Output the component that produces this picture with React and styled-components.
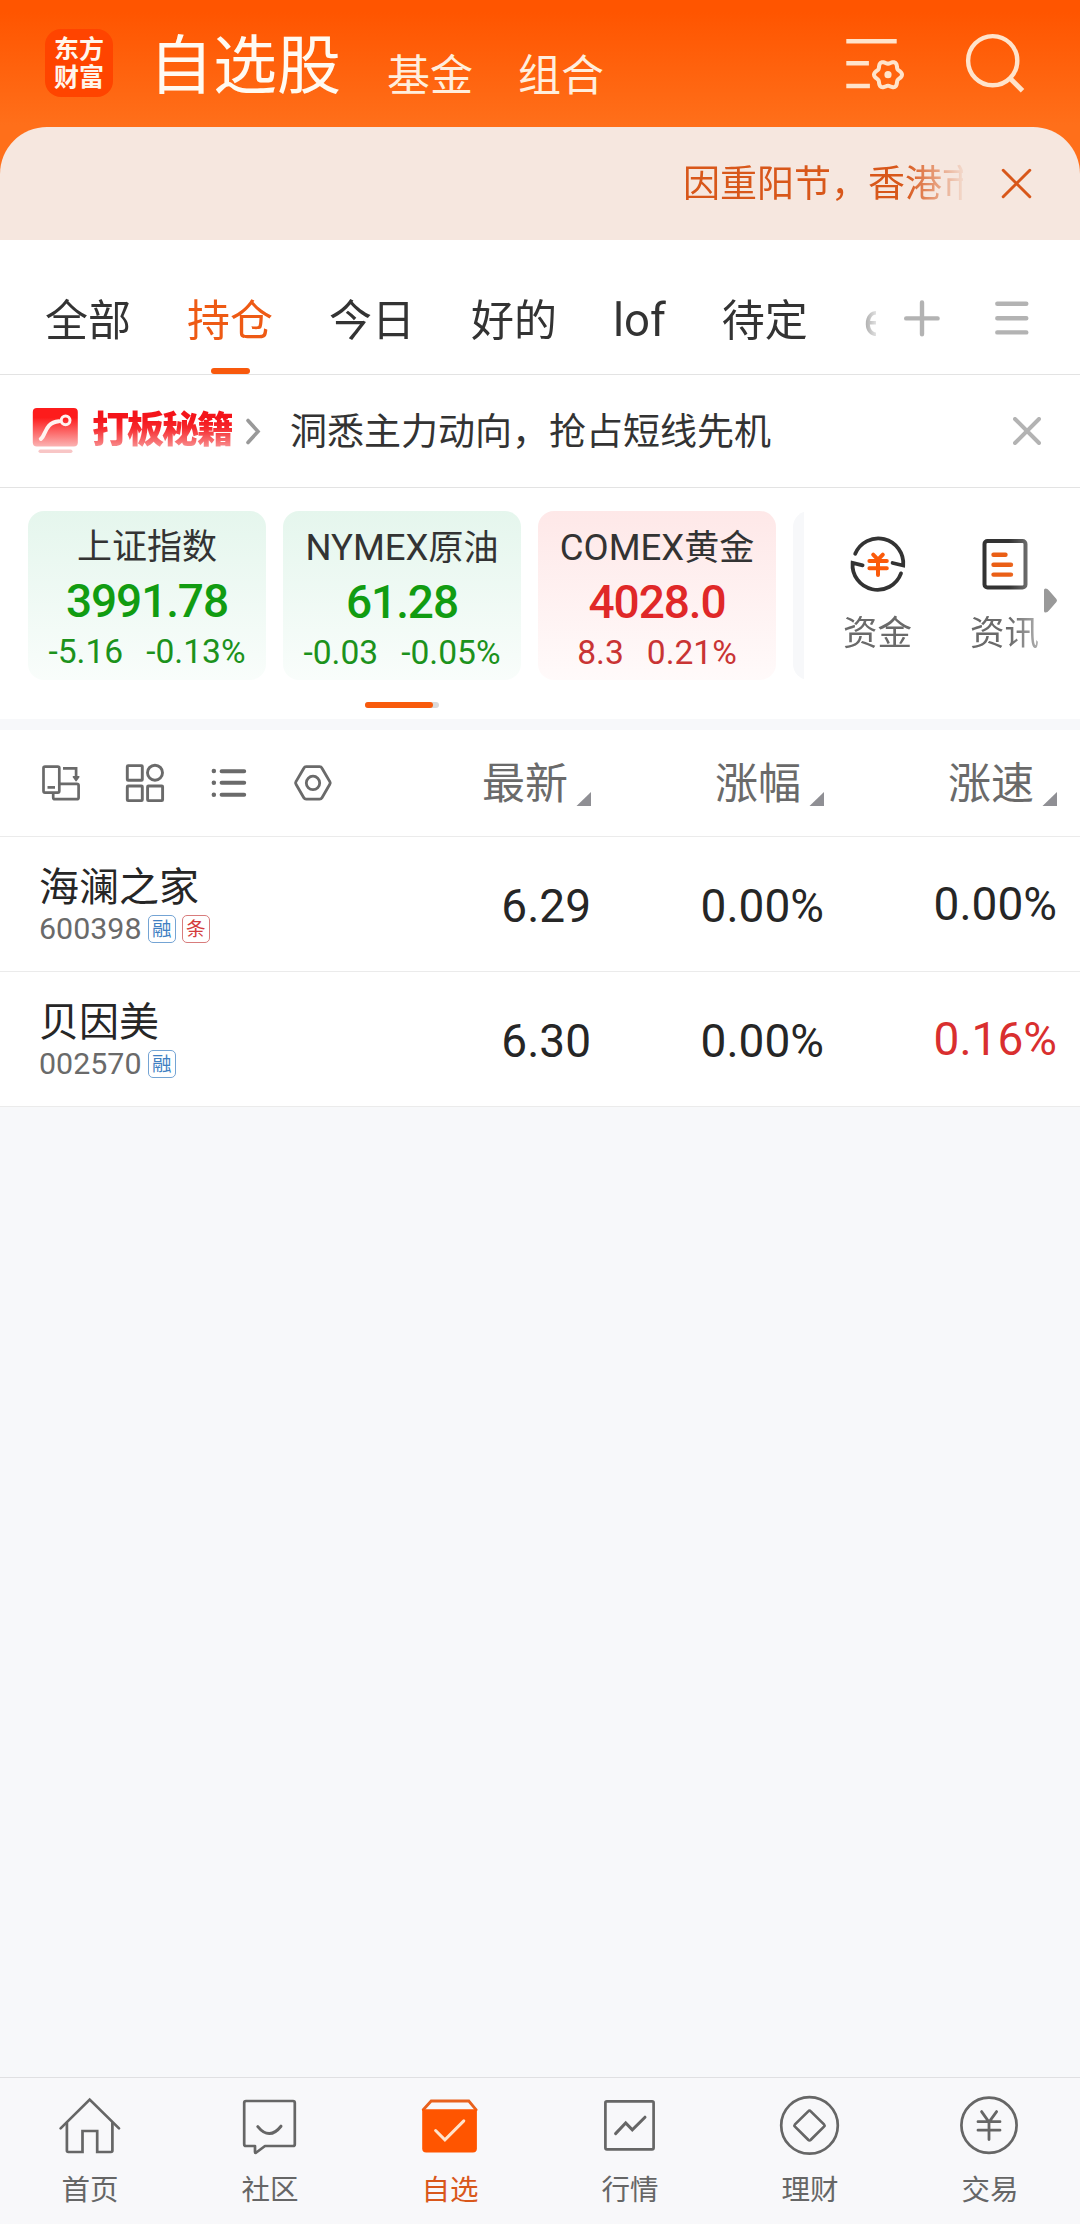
import styled, { createGlobalStyle, css } from "styled-components";

const GlobalStyle = createGlobalStyle`
  * {
    box-sizing: border-box;
  }

  body {
    margin: 0;
    background: #f7f8fa;
    font-family: Roboto, "Noto Sans CJK SC", sans-serif;
    color: #333;
  }

  svg {
    display: block;
    flex: none;
  }
`;

const Page = styled.div`
  width: 1080px;
  height: 2224px;
  display: flex;
  flex-direction: column;
  overflow: hidden;
  white-space: nowrap;
`;

/* ---------- header ---------- */

const Top = styled.header`
  flex: none;
  height: 240px;
  background: linear-gradient(180deg, #ff5500 12px, #ff6f1a 125px, #ff6f1a 180px);
`;

const TitleBar = styled.div`
  height: 127px;
  display: flex;
  align-items: flex-start;
  padding-left: 45px;
`;

const Logo = styled.div`
  width: 68px;
  height: 68px;
  margin: 29px 36px 0 0;
  padding-top: 7px;
  border-radius: 16px;
  background: #ff4400;
  color: #fff6ec;
  font-size: 25px;
  font-weight: 700;
  line-height: 28px;
  text-align: center;
`;

const MainTitle = styled.h1`
  margin: 27px 46px 0 0;
  width: 192px;
  font-size: 64px;
  font-weight: 400;
  line-height: 80px;
  color: #fffaf2;
`;

const SubTitle = styled.span`
  width: 86px;
  margin: 46px 45px 0 0;
  font-size: 43px;
  line-height: 60px;
  color: #ffeedd;
`;

const HeaderIcons = styled.div`
  flex: 1;
  display: flex;
  justify-content: flex-end;
  gap: 56px;
  padding: 30px 52px 0 0;
`;

const Notice = styled.div`
  height: 113px;
  display: flex;
  align-items: center;
  justify-content: flex-end;
  border-radius: 47px 47px 0 0;
  background: #f6e7df;
  color: #d8571a;
`;

const Marquee = styled.div`
  width: 280px;
  padding-top: 2px;
  overflow: hidden;
  font-size: 37px;
  line-height: 52px;
  mask-image: linear-gradient(90deg, #000 222px, transparent 286px);
`;

const NoticeClose = styled.div`
  padding: 0 48px 0 38px;
`;

/* ---------- group tabs ---------- */

const TabBar = styled.nav`
  flex: none;
  height: 135px;
  display: flex;
  background: #fff;
  border-bottom: 1px solid #e3e3e3;
`;

const TabScroll = styled.div`
  width: 876px;
  display: flex;
  gap: 56px;
  padding-left: 45px;
  overflow: hidden;
  mask-image: linear-gradient(90deg, #000 840px, transparent 882px);
`;

const Tab = styled.div`
  flex: none;
  position: relative;
  height: 134px;
  padding-top: 50px;
  font-size: ${({ $latin }) => ($latin ? 45.5 : 43)}px;
  line-height: 62px;
  color: ${({ $active }) => ($active ? "#ee5a14" : "#333")};

  ${({ $active }) =>
    $active &&
    css`
      &::after {
        content: "";
        position: absolute;
        left: 50%;
        bottom: 0;
        width: 39px;
        height: 6px;
        margin-left: -19px;
        border-radius: 3px;
        background: #f8590d;
      }
    `}
`;

const TabActions = styled.div`
  display: flex;
  align-items: flex-start;
  gap: 50px;
  padding: 58px 0 0 26px;
`;

/* ---------- promo ---------- */

const Promo = styled.div`
  flex: none;
  height: 113px;
  display: flex;
  align-items: center;
  padding: 0 39px 0 31px;
  background: #fff;
  border-bottom: 1px solid #e3e3e3;
`;

const PromoTitle = styled.span`
  width: 140px;
  margin: 0 13px 0 13px;
  font-size: 37px;
  font-weight: 900;
  letter-spacing: -2px;
  line-height: 46px;
  color: transparent;
  background: linear-gradient(180deg, #f4141a 10px, #f6282c 20px, #f9a8a8 44px);
  background-clip: text;
`;

const PromoText = styled.span`
  flex: 1;
  margin-left: 28px;
  padding-top: 3px;
  font-size: 37px;
  line-height: 54px;
  color: #333;
`;

/* ---------- index cards ---------- */

const Board = styled.section`
  flex: none;
  height: 231px;
  display: flex;
  padding-top: 23px;
  background: #fff;
`;

const CardArea = styled.div`
  width: 804px;
`;

const CardList = styled.div`
  display: flex;
  gap: 17px;
  padding-left: 28px;
  overflow: hidden;
`;

const tones = {
  down: { bg: "linear-gradient(180deg, #e5f6ed, #f9fdfb)", value: "#119c11", sub: "#1c921c" },
  up: { bg: "linear-gradient(180deg, #fee8e8, #fffafa)", value: "#e02828", sub: "#c93434" },
  idle: { bg: "#f7f8fa", value: "#333", sub: "#333" },
};

const Card = styled.div`
  flex: none;
  width: 238px;
  height: 169px;
  border-radius: 16px;
  background: ${({ $tone }) => tones[$tone].bg};
  text-align: center;
`;

const CardName = styled.div`
  padding-top: 13px;
  font-size: 35px;
  line-height: 48px;
  color: #333;
`;

const Latin = styled.span`
  font-size: 36.5px;
`;

const CardValue = styled.div`
  font-size: 46px;
  font-weight: 500;
  line-height: 58px;
  letter-spacing: -1.1px;
  color: ${({ $tone }) => tones[$tone].value};
`;

const CardChange = styled.div`
  display: flex;
  justify-content: center;
  gap: 23px;
  font-size: 33.6px;
  line-height: 43px;
  color: ${({ $tone }) => tones[$tone].sub};
`;

const ScrollTrack = styled.div`
  width: 74px;
  height: 6px;
  margin: 22px 0 0 365px;
  border-radius: 3px;
  background: #d9d9d9;
`;

const ScrollThumb = styled.div`
  width: 68px;
  height: 6px;
  border-radius: 3px;
  background: #f85a0c;
`;

const Shortcuts = styled.div`
  width: 240px;
  display: flex;
  padding-left: 10px;
  overflow: hidden;
  mask-image: linear-gradient(90deg, #000 205px, transparent 270px);
`;

const Shortcut = styled.div`
  flex: none;
  width: 127px;
  display: flex;
  flex-direction: column;
  align-items: center;
  padding-top: 23px;
  font-size: 34.5px;
  line-height: 48px;
  color: #6a6a6a;

  svg {
    margin-bottom: 15px;
  }
`;

const MoreArrow = styled.div`
  padding-top: 77px;
`;

const Divider = styled.div`
  flex: none;
  height: 11px;
  background: #f7f8fa;
`;

/* ---------- stock table ---------- */

const rowGrid = css`
  display: grid;
  grid-template-columns: 1fr 233px 233px 233px;
  align-items: start;
  padding: 0 23px 0 39px;
  background: #fff;
  border-bottom: 1px solid #ebebeb;
`;

const TableHead = styled.div`
  ${rowGrid}
  flex: none;
  height: 107px;
`;

const Tools = styled.div`
  display: flex;
  gap: 40px;
  padding: 31px 0 0 1px;
`;

const HeadCell = styled.div`
  display: flex;
  justify-content: flex-end;
  align-items: flex-start;
  padding-top: 24px;
  font-size: 43px;
  line-height: 60px;
  color: #6a6a6a;

  svg {
    margin: 38px 0 0 8px;
  }
`;

const StockRow = styled.div`
  ${rowGrid}
  flex: none;
  height: 135px;
`;

const StockName = styled.div`
  padding-top: 27px;
  font-size: 40px;
  line-height: 48px;
  color: #262626;
`;

const StockCode = styled.div`
  display: flex;
  align-items: center;
  gap: 6px;
  height: 34px;
  font-size: 30.4px;
  line-height: 34px;
  color: #6a6a6a;
`;

const Code = styled.span`
  width: 103px;
`;

const Badge = styled.span`
  width: 28px;
  height: 28px;
  border: 1.5px solid ${({ $red }) => ($red ? "#d87c7c" : "#74a4d4")};
  border-radius: 5px;
  font-size: 19.5px;
  line-height: 27px;
  text-align: center;
  text-indent: -0.5px;
  color: ${({ $red }) => ($red ? "#d43c3c" : "#4080c2")};
`;

const Cell = styled.div`
  padding-top: ${({ $raised }) => ($raised ? 40 : 42)}px;
  font-size: 46px;
  line-height: 54px;
  text-align: right;
  color: ${({ $up }) => ($up ? "#d92f2f" : "#262626")};
`;

/* ---------- bottom nav ---------- */

const Spacer = styled.div`
  flex: 1;
`;

const BottomNav = styled.nav`
  flex: none;
  height: 147px;
  display: grid;
  grid-template-columns: repeat(6, 1fr);
  background: #f8f8fa;
  border-top: 1px solid #e0e0e2;
`;

const NavItem = styled.div`
  display: flex;
  flex-direction: column;
  align-items: center;
  padding-top: 15px;
  font-size: 28.5px;
  line-height: 40px;
  color: ${({ $active }) => ($active ? "#d9571a" : "#666")};

  svg {
    margin-bottom: 14px;
  }
`;

/* ---------- icons ---------- */

// six soft lobes around (46, 44.7)
const gearPoints = Array.from({ length: 73 }, (_, i) => {
  const a = (i / 72) * Math.PI * 2;
  const r = 12.5 + 1.5 * Math.cos(a * 6);
  return `${(46 + r * Math.cos(a)).toFixed(2)},${(44.7 + r * Math.sin(a)).toFixed(2)}`;
}).join(" ");

const FilterIcon = () => (
  <svg width="64" height="64" viewBox="0 0 64 64" fill="none" stroke="#ffe3cb" strokeWidth="4.4">
    <path d="M4.3 11.3h50.4M4.3 33.3h22.6M4.3 56h23.6" />
    <polygon points={gearPoints} strokeWidth="4" strokeLinejoin="round" />
    <circle cx="46" cy="44.7" r="3.6" fill="#ffe3cb" stroke="none" />
  </svg>
);

const SearchIcon = () => (
  <svg width="66" height="66" viewBox="0 0 66 66" fill="none" stroke="#ffe3cb" strokeWidth="4.4">
    <circle cx="30.7" cy="30.7" r="24.6" />
    <path d="M48 48.3L60.5 60.8" strokeWidth="5" />
  </svg>
);

const CloseIcon = ({ size, weight, color }) => (
  <svg width={size} height={size} viewBox="0 0 28 28" stroke={color} strokeWidth={weight} strokeLinecap="round">
    <path d="M2 2L26 26M26 2L2 26" />
  </svg>
);

const PlusIcon = () => (
  <svg width="40" height="40" viewBox="0 0 40 40" stroke="#b3b3b3" strokeWidth="4.4" strokeLinecap="round">
    <path d="M20 4.5V36.3M4.2 20.4H35.6" />
  </svg>
);

const MenuIcon = () => (
  <svg width="40" height="40" viewBox="0 0 40 40" stroke="#b3b3b3" strokeWidth="4.4" strokeLinecap="round">
    <path d="M5.3 5.8H34.3M5.3 20.3H34.3M5.3 34.4H34.3" />
  </svg>
);

const PromoIcon = () => (
  <svg width="48" height="48" viewBox="0 0 48 48" fill="none">
    <defs>
      <linearGradient id="promo" x1="0" y1="0" x2="0" y2="1">
        <stop offset="0.25" stopColor="#fd1c1c" />
        <stop offset="1" stopColor="#fbb4b4" />
      </linearGradient>
    </defs>
    <rect x="1.8" y="1" width="45" height="38.6" rx="4" fill="url(#promo)" />
    <path d="M9.8 32C15 28.5 13.5 15.5 28 14.3" stroke="#fff3f0" strokeWidth="4" strokeLinecap="round" />
    <circle cx="34.6" cy="13.3" r="4.4" stroke="#fff3f0" strokeWidth="3" />
    <rect x="7.5" y="42.5" width="34" height="3.6" rx="1.8" fill="#f8c6c6" />
  </svg>
);

const ChevronIcon = () => (
  <svg width="17" height="28" viewBox="0 0 17 28" fill="none" stroke="#999" strokeWidth="3.6" strokeLinecap="round">
    <path d="M3 3.5L13 14.5L3 25.5" />
  </svg>
);

const FundsIcon = () => (
  <svg width="60" height="60" viewBox="0 0 60 60" fill="none" stroke="#333" strokeWidth="3.8">
    <path d="M7.2 19.8A25 25 0 0 1 55.2 31.5L44.6 29" strokeLinecap="round" />
    <path d="M53 39.4A25 25 0 0 1 4.6 28.8L14.6 31.3" strokeLinecap="round" />
    <path d="M25.2 20.6L30 25.6L34.8 20.6M30 25.6V41M21.4 27H38.8M21.4 34.2H38.8" stroke="#fb5a0a" strokeWidth="4" strokeLinecap="round" />
  </svg>
);

const NewsIcon = () => (
  <svg width="60" height="60" viewBox="0 0 60 60" fill="none" stroke="#333" strokeWidth="4">
    <rect x="9.5" y="7" width="41" height="46.5" rx="3" />
    <path d="M18.5 20.7H30.5M18.5 30.7H36M18.5 40.6H36" stroke="#ea5f16" strokeWidth="4.4" strokeLinecap="round" />
  </svg>
);

const DeviceIcon = () => (
  <svg width="44" height="44" viewBox="0 0 44 44" fill="none" stroke="#6a6a6a" strokeWidth="2.7">
    <rect x="3.5" y="5.6" width="15.8" height="26" rx="1.5" />
    <path d="M7.5 26.4H15" />
    <path d="M19.3 22.8H36.8Q38.6 22.8 38.6 24.6V36.4Q38.6 38.2 36.8 38.2H15Q13.2 38.2 13.2 36.4V31.6" />
    <path d="M23 7.4H36.1V17" />
    <path d="M33.4 15.8H38.8L36.1 19.6Z" fill="#6a6a6a" strokeWidth="1.6" strokeLinejoin="round" />
  </svg>
);

const GridIcon = () => (
  <svg width="44" height="44" viewBox="0 0 44 44" fill="none" stroke="#6a6a6a" strokeWidth="2.9">
    <rect x="3.3" y="4.6" width="15" height="14.6" rx="0.8" />
    <circle cx="31" cy="11.7" r="7.5" />
    <rect x="3.3" y="25" width="15" height="14.6" rx="0.8" />
    <rect x="23.6" y="25" width="15" height="14.6" rx="0.8" />
  </svg>
);

const ListIcon = () => (
  <svg width="44" height="44" viewBox="0 0 44 44" stroke="#6a6a6a" strokeWidth="4" strokeLinecap="round">
    <path d="M13.6 10.2H36.2M13.6 21.8H36.2M13.6 33.8H36.2" />
    <path d="M5.8 10H5.9M5.8 21.8H5.9M5.8 33.8H5.9" strokeWidth="4.4" />
  </svg>
);

const HexIcon = () => (
  <svg width="44" height="44" viewBox="0.8 0 44 44" fill="none" stroke="#6a6a6a" strokeWidth="2.8" strokeLinejoin="round">
    <path d="M12.6 7.2Q13.4 5.7 15 5.7H28.4Q30 5.7 30.8 7.2L38.6 20.6Q39.4 21.9 38.6 23.2L30.8 36.7Q30 38.1 28.4 38.1H15Q13.4 38.1 12.6 36.7L4.8 23.2Q4 21.9 4.8 20.6Z" />
    <circle cx="21.8" cy="21.9" r="6.7" />
  </svg>
);

const SortIcon = () => (
  <svg width="15" height="14" viewBox="0 0 15 14">
    <path d="M15 0V14H0.5Z" fill="#8f8f94" />
  </svg>
);

const NavSvg = ({ children }) => (
  <svg width="64" height="64" viewBox="0 0 64 64" fill="none" stroke="currentColor" strokeWidth="2.7" strokeLinecap="round">
    {children}
  </svg>
);

const navItems = [
  {
    label: "首页",
    icon: (
      <>
        <path d="M2.6 35.4L31.7 6.6L61 35.4" />
        <path d="M8.9 30V57.6Q8.9 59 10.3 59H24.5V38H39.2V59H53Q54.4 59 54.4 57.6V30" />
      </>
    ),
  },
  {
    label: "社区",
    icon: (
      <>
        <path d="M17 53H8Q6.2 53 6.2 51.2V9.8Q6.2 8 8 8H55Q56.8 8 56.8 9.8V51.2Q56.8 53 55 53H27L17.6 60Q17 60 17 59Z" strokeLinejoin="round" />
        <path d="M19.8 33.6Q31.4 47.8 43 33.2" strokeWidth="3" />
      </>
    ),
  },
  {
    label: "自选",
    active: true,
    icon: (
      <>
        <path d="M5.2 16.8L13.2 8H50.8L58.2 16.8" strokeWidth="2.8" stroke="#e8611d" />
        <path d="M4.2 16.3H58.9V55.6Q58.9 59.6 54.9 59.6H8.2Q4.2 59.6 4.2 55.6Z" fill="#ff5500" stroke="none" />
        <path d="M17.6 37.5L26.9 46.8L45.8 27.9" stroke="#ffe3cb" strokeWidth="3" />
      </>
    ),
  },
  {
    label: "行情",
    icon: (
      <>
        <rect x="7.4" y="8.3" width="48.2" height="48" rx="1.5" />
        <path d="M17.6 40.6L27.7 30L34.3 36.9L47 24.2" strokeWidth="3" />
      </>
    ),
  },
  {
    label: "理财",
    icon: (
      <>
        <circle cx="31.5" cy="32.4" r="28.3" />
        <path d="M30.2 18.4Q31.5 17 32.8 18.4L46 31.4Q47 32.5 46 33.6L32.8 46.8Q31.5 48.2 30.2 46.8L17 33.6Q16 32.5 17 31.4Z" />
      </>
    ),
  },
  {
    label: "交易",
    icon: (
      <>
        <circle cx="31" cy="32.2" r="27.6" />
        <path d="M23.6 18.6L31 29L38.6 18.6M31 29V46.6M20 28.7H42M20 37.2H42" strokeWidth="2.8" />
      </>
    ),
  },
];

/* ---------- data ---------- */

const tabs = [
  { label: "全部" },
  { label: "持仓", active: true },
  { label: "今日" },
  { label: "好的" },
  { label: "lof", latin: true },
  { label: "待定" },
  { label: "etf", latin: true },
];

const indexes = [
  { name: "上证指数", value: "3991.78", change: "-5.16", pct: "-0.13%", tone: "down" },
  { latin: "NYMEX", name: "原油", value: "61.28", change: "-0.03", pct: "-0.05%", tone: "down" },
  { latin: "COMEX", name: "黄金", value: "4028.0", change: "8.3", pct: "0.21%", tone: "up" },
];

const stocks = [
  { name: "海澜之家", code: "600398", badges: ["融", "条"], price: "6.29", pct: "0.00%", speed: "0.00%" },
  { name: "贝因美", code: "002570", badges: ["融"], price: "6.30", pct: "0.00%", speed: "0.16%", up: true },
];

const App = () => (
  <>
    <GlobalStyle />
    <Page>
      <Top>
        <TitleBar>
          <Logo>
            东方
            <br />
            财富
          </Logo>
          <MainTitle>自选股</MainTitle>
          <SubTitle>基金</SubTitle>
          <SubTitle>组合</SubTitle>
          <HeaderIcons>
            <FilterIcon />
            <SearchIcon />
          </HeaderIcons>
        </TitleBar>
        <Notice>
          <Marquee>因重阳节，香港市</Marquee>
          <NoticeClose>
            <CloseIcon size={31} weight={2.7} color="#d8571a" />
          </NoticeClose>
        </Notice>
      </Top>

      <TabBar>
        <TabScroll>
          {tabs.map((t) => (
            <Tab key={t.label} $active={t.active} $latin={t.latin}>
              {t.label}
            </Tab>
          ))}
        </TabScroll>
        <TabActions>
          <PlusIcon />
          <MenuIcon />
        </TabActions>
      </TabBar>

      <Promo>
        <PromoIcon />
        <PromoTitle>打板秘籍</PromoTitle>
        <ChevronIcon />
        <PromoText>洞悉主力动向，抢占短线先机</PromoText>
        <CloseIcon size={28} weight={4} color="#b3b3b3" />
      </Promo>

      <Board>
        <CardArea>
          <CardList>
            {indexes.map((item) => (
              <Card key={item.name} $tone={item.tone}>
                <CardName>
                  {item.latin && <Latin>{item.latin}</Latin>}
                  {item.name}
                </CardName>
                <CardValue $tone={item.tone}>{item.value}</CardValue>
                <CardChange $tone={item.tone}>
                  <span>{item.change}</span>
                  <span>{item.pct}</span>
                </CardChange>
              </Card>
            ))}
            <Card $tone="idle" />
          </CardList>
          <ScrollTrack>
            <ScrollThumb />
          </ScrollTrack>
        </CardArea>
        <Shortcuts>
          <Shortcut>
            <FundsIcon />
            资金
          </Shortcut>
          <Shortcut>
            <NewsIcon />
            资讯
          </Shortcut>
        </Shortcuts>
        <MoreArrow>
          <svg width="14" height="25" viewBox="0 0 14 25">
            <path d="M0 2Q0 0.5 1.6 0.5Q3.4 0.5 5 2.4L12.4 11Q13.6 12.5 12.4 14L5 22.6Q3.4 24.5 1.6 24.5Q0 24.5 0 23Z" fill="#999" />
          </svg>
        </MoreArrow>
      </Board>

      <Divider />

      <TableHead>
        <Tools>
          <DeviceIcon />
          <GridIcon />
          <ListIcon />
          <HexIcon />
        </Tools>
        {["最新", "涨幅", "涨速"].map((label) => (
          <HeadCell key={label}>
            {label}
            <SortIcon />
          </HeadCell>
        ))}
      </TableHead>

      {stocks.map((s) => (
        <StockRow key={s.code}>
          <div>
            <StockName>{s.name}</StockName>
            <StockCode>
              <Code>{s.code}</Code>
              {s.badges.map((b) => (
                <Badge key={b} $red={b === "条"}>
                  {b}
                </Badge>
              ))}
            </StockCode>
          </div>
          <Cell>{s.price}</Cell>
          <Cell>{s.pct}</Cell>
          <Cell $raised $up={s.up}>
            {s.speed}
          </Cell>
        </StockRow>
      ))}

      <Spacer />

      <BottomNav>
        {navItems.map((item) => (
          <NavItem key={item.label} $active={item.active}>
            <NavSvg>{item.icon}</NavSvg>
            {item.label}
          </NavItem>
        ))}
      </BottomNav>
    </Page>
  </>
);

export default App;
